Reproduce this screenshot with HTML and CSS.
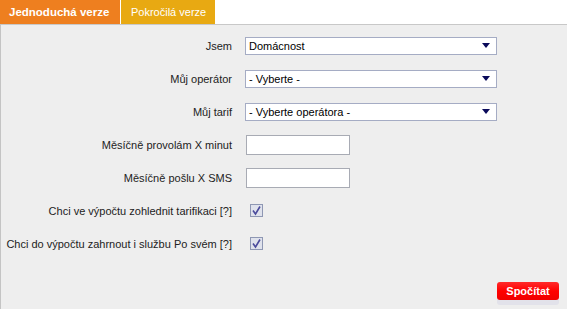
FILE: index.html
```html
<!DOCTYPE html>
<html lang="cs">
<head>
    <meta charset="UTF-8">
    <title>Kalkulačka tarifů</title>
    <link rel="stylesheet" href="styles.css">
</head>
<body>
    <div class="tabs">
        <div class="tab tab-active">Jednoduchá verze</div>
        <div class="tab tab-other">Pokročilá verze</div>
    </div>

    <div class="panel">
        <div class="form">
            <div class="label">Jsem</div>
            <div class="field">
                <div class="select">
                    <span>Domácnost</span>
                    <svg class="arrow" width="8" height="5" viewBox="0 0 8 5"><path d="M0 0H8L4 5Z" fill="#0a0a5a"/></svg>
                </div>
            </div>

            <div class="label">Můj operátor</div>
            <div class="field">
                <div class="select">
                    <span>- Vyberte -</span>
                    <svg class="arrow" width="8" height="5" viewBox="0 0 8 5"><path d="M0 0H8L4 5Z" fill="#0a0a5a"/></svg>
                </div>
            </div>

            <div class="label">Můj tarif</div>
            <div class="field">
                <div class="select">
                    <span>- Vyberte operátora -</span>
                    <svg class="arrow" width="8" height="5" viewBox="0 0 8 5"><path d="M0 0H8L4 5Z" fill="#0a0a5a"/></svg>
                </div>
            </div>

            <div class="label">Měsíčně provolám X minut</div>
            <div class="field"><input class="text" type="text"></div>

            <div class="label">Měsíčně pošlu X SMS</div>
            <div class="field"><input class="text" type="text"></div>

            <div class="label">Chci ve výpočtu zohlednit tarifikaci [?]</div>
            <div class="field">
                <svg class="check" width="13" height="13" viewBox="0 0 13 13">
                    <rect x="0.5" y="0.5" width="12" height="12" fill="#dfe2ec" stroke="#8e97b3"/>
                    <path d="M3 6.5L5.5 10L10 2.5" fill="none" stroke="#4b4b9c" stroke-width="1.6"/>
                </svg>
            </div>

            <div class="label">Chci do výpočtu zahrnout i službu Po svém [?]</div>
            <div class="field">
                <svg class="check" width="13" height="13" viewBox="0 0 13 13">
                    <rect x="0.5" y="0.5" width="12" height="12" fill="#dfe2ec" stroke="#8e97b3"/>
                    <path d="M3 6.5L5.5 10L10 2.5" fill="none" stroke="#4b4b9c" stroke-width="1.6"/>
                </svg>
            </div>
        </div>

        <div class="actions">
            <button class="submit-btn">Spočítat</button>
        </div>
    </div>
</body>
</html>
```

FILE: styles.css
```css
html, body {
    margin: 0;
    padding: 0;
    background: white;
    height: 100%;
}
body {
    font-family: "Liberation Sans", Arial, sans-serif;
    font-size: 11px;
    color: #222;
    display: flex;
    flex-direction: column;
}
.tabs {
    display: flex;
    height: 24px;
}
.tab {
    height: 24px;
    line-height: 24px;
    font-size: 11px;
    color: white;
}
.tab-active {
    width: 120px;
    background: #ee7f1f;
    font-weight: bold;
    font-size: 11.5px;
    padding-left: 9px;
    box-sizing: border-box;
}
.tab-other {
    width: 94px;
    margin-left: 1px;
    background: #e8a912;
    padding-left: 10px;
    box-sizing: border-box;
}
.panel {
    flex: 1;
    background: #eeeeee;
    border-top: 1px solid #c8c8c8;
    border-left: 1px solid #c4c4c4;
    display: flex;
    flex-direction: column;
}
.form {
    display: grid;
    grid-template-columns: 231px 252px;
    grid-auto-rows: 33px;
    column-gap: 13px;
    padding-top: 4px;
}
.label {
    text-align: right;
    align-self: center;
    white-space: nowrap;
    color: #222;
}
.field {
    display: flex;
    align-items: center;
}
.select {
    width: 252px;
    height: 18px;
    box-sizing: border-box;
    background: white;
    border: 1px solid #a5acc4;
    display: flex;
    align-items: center;
    justify-content: space-between;
    padding: 0 6px 0 3px;
    color: #000;
    font-size: 11px;
}
.text {
    width: 104px;
    height: 20px;
    box-sizing: border-box;
    border: 1px solid #a8abb4;
    background: white;
    margin: 0 0 0 1px;
}
.check {
    margin-left: 5px;
}
.actions {
    margin-top: auto;
    display: flex;
    justify-content: flex-end;
    padding: 0 8px 9px 0;
}
.submit-btn {
    width: 62px;
    height: 18px;
    padding: 0;
    border: none;
    border-radius: 3px;
    background: linear-gradient(#ff2a2a, #ff0000 50%, #f00000);
    color: white;
    font-family: "Liberation Sans", Arial, sans-serif;
    font-weight: bold;
    font-size: 11px;
    box-shadow: 0 5px 0 #e2e2ea;
    cursor: pointer;
}
```
